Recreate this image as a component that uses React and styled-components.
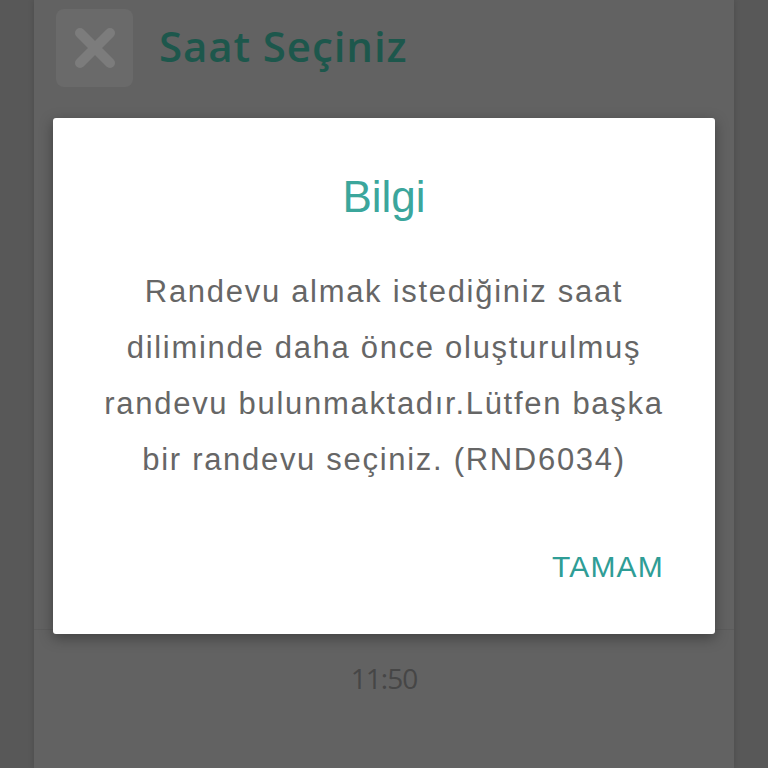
import React from "react";
import styled, { createGlobalStyle } from "styled-components";

const Global = createGlobalStyle`
  html, body { margin: 0; padding: 0; background: #585858; }
  body { font-family: "Liberation Sans", Arial, sans-serif; }
`;

const Page = styled.div`
  position: relative;
  width: 768px;
  height: 768px;
  overflow: hidden;
  background: #585858;
  display: flex;
  justify-content: center;
`;

const Panel = styled.div`
  width: 700px;
  height: 768px;
  background: #626262;
  box-shadow: 0 0 6px rgba(0, 0, 0, 0.15);
  display: flex;
  flex-direction: column;
`;

const Header = styled.div`
  display: flex;
  align-items: center;
  gap: 26px;
  padding: 9px 0 0 22px;
  height: 78px;
`;

const CloseBox = styled.div`
  width: 77px;
  height: 78px;
  border-radius: 8px;
  background: #6a6a6a;
  display: flex;
  align-items: center;
  justify-content: center;
`;

const Title = styled.div`
  font-family: "Open Sans", "Noto Sans", sans-serif;
  font-weight: 600;
  font-size: 42px;
  letter-spacing: 0.9px;
  color: #1d574c;
  margin-top: -6px;
`;

const Spacer = styled.div`
  flex: 1;
`;

const TimeRow = styled.div`
  height: 96px;
  margin-bottom: 42px;
  display: flex;
  align-items: center;
  justify-content: center;
  font-family: "Open Sans", "Noto Sans", sans-serif;
  font-weight: 500;
  font-size: 28px;
  letter-spacing: -1px;
  color: #464646;
  border-top: 1px solid #5c5c5c;
`;

const Dialog = styled.div`
  position: absolute;
  left: 53px;
  top: 118px;
  width: 662px;
  box-sizing: border-box;
  background: #ffffff;
  border-radius: 3px;
  box-shadow: 0 4px 14px rgba(0, 0, 0, 0.35);
  padding: 57px 40px 52px;
  display: flex;
  flex-direction: column;
`;

const DialogTitle = styled.div`
  font-size: 44px;
  line-height: 44px;
  text-align: center;
  color: #3ba69c;
  margin-bottom: 45px;
`;

const Message = styled.div`
  font-size: 31px;
  line-height: 56px;
  letter-spacing: 1.7px;
  text-align: center;
  color: #666666;
  margin-bottom: 64px;
`;

const Actions = styled.div`
  display: flex;
  justify-content: flex-end;
  padding-right: 11px;
`;

const OkButton = styled.button`
  border: none;
  background: none;
  padding: 0;
  font-family: "Liberation Sans", Arial, sans-serif;
  font-size: 30px;
  line-height: 30px;
  letter-spacing: 1.2px;
  color: #2f9d96;
  cursor: pointer;
`;

export default function App() {
  return (
    <>
      <Global />
      <Page>
        <Panel>
          <Header>
            <CloseBox>
              <svg width="46" height="44" viewBox="0 0 46 44">
                <path
                  d="M8 7 L38 37 M38 7 L8 37"
                  stroke="#7c7c7c"
                  strokeWidth="10"
                  strokeLinecap="round"
                />
              </svg>
            </CloseBox>
            <Title>Saat Seçiniz</Title>
          </Header>
          <Spacer />
          <TimeRow>11:50</TimeRow>
        </Panel>
        <Dialog>
          <DialogTitle>Bilgi</DialogTitle>
          <Message>
            Randevu almak istediğiniz saat diliminde daha önce oluşturulmuş
            randevu bulunmaktadır.Lütfen başka bir randevu seçiniz. (RND6034)
          </Message>
          <Actions>
            <OkButton>TAMAM</OkButton>
          </Actions>
        </Dialog>
      </Page>
    </>
  );
}
